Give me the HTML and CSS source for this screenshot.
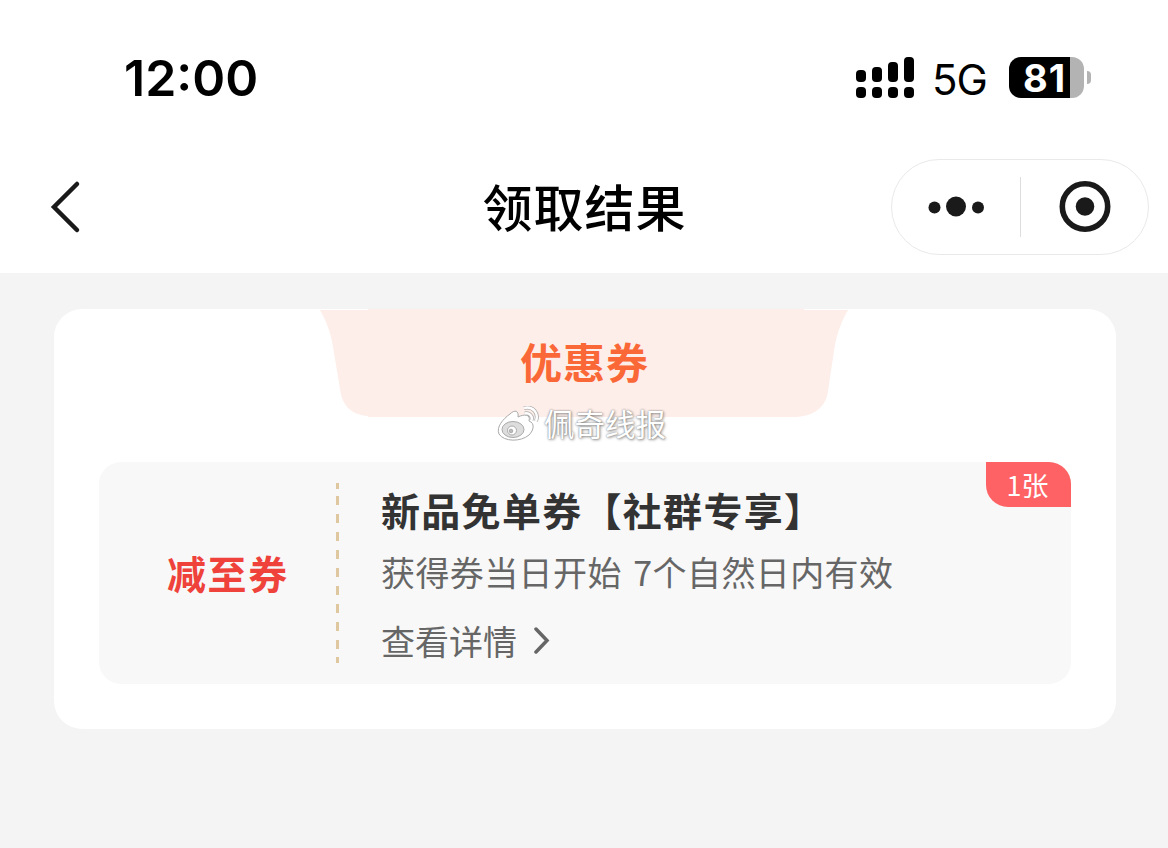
FILE: index.html
```
<!DOCTYPE html>
<html lang="zh-CN">
<head>
  <meta charset="UTF-8">
  <title>领取结果</title>
  <link rel="stylesheet" href="styles.css">
</head>
<body>
  <header class="statusbar">
    <span class="time">12:00</span>
    <div class="status-right">
      <svg class="signal" width="58" height="42" viewBox="0 0 58 42">
        <rect x="0" y="13" width="10" height="12" rx="4"/>
        <rect x="16" y="10" width="10" height="15" rx="4"/>
        <rect x="32" y="5" width="10" height="20" rx="4"/>
        <rect x="48" y="0" width="10" height="25" rx="4"/>
        <rect x="0" y="30" width="10" height="11" rx="4"/>
        <rect x="16" y="30" width="10" height="11" rx="4"/>
        <rect x="32" y="30" width="10" height="11" rx="4"/>
        <rect x="48" y="30" width="10" height="11" rx="4"/>
      </svg>
      <span class="network">5G</span>
      <div class="battery">81</div>
      <i class="battery-tip"></i>
    </div>
  </header>

  <nav class="navbar">
    <svg class="back" width="32" height="54" viewBox="0 0 32 54">
      <path d="M28 4 L5 27 L28 50"/>
    </svg>
    <h1>领取结果</h1>
    <div class="capsule">
      <svg width="58" height="24" viewBox="0 0 58 24">
        <circle cx="7.500" cy="12.500" r="6"/>
        <circle cx="29" cy="11.500" r="10"/>
        <circle cx="51" cy="12.500" r="6"/>
      </svg>
      <span class="split"></span>
      <svg width="52" height="52" viewBox="0 0 52 52">
        <circle class="ring" cx="26" cy="25.500" r="22.7"/>
        <circle cx="26" cy="25.500" r="9.3"/>
      </svg>
    </div>
  </nav>

  <main class="content">
    <section class="card">
      <div class="card-head">
        <svg class="tab" width="530" height="108" viewBox="0 0 530 108">
          <path d="M0 1 H48 V0 H484 V1 H528 C520 15 516 28 514 42 L508 82 C506 99 493 107 476 108 H48 V107 C32 106 22 97 20 80 L13 38 C11 24 7 14 0 1 Z"/>
        </svg>
        <h2>优惠券</h2>
        <div class="watermark">
          <svg width="42" height="36" viewBox="0 0 42 36">
            <path d="M13 8 C18 3 22 5 21 11 C27 8 34 8 32 15 C38 17 37 24 32 29 C24 36 7 36 2 28 C-1 21 6 13 13 8 Z"/>
            <ellipse class="eye" cx="16" cy="23.5" rx="11" ry="8"/>
            <circle cx="15" cy="24.5" r="4.5"/>
            <circle class="pupil" cx="14" cy="25" r="1.8"/>
            <path class="outline" d="M27 2 C36 0 42 7 39 15 M28 7.5 C32 6.5 36 10 34.5 14"/>
            <path class="wave" d="M27 2 C36 0 42 7 39 15 M28 7.5 C32 6.5 36 10 34.5 14"/>
          </svg>
          <span>佩奇线报</span>
        </div>
      </div>

      <div class="coupon">
        <div class="coupon-type">减至券</div>
        <svg class="divider" width="3" height="180" viewBox="0 0 3 180">
          <path d="M1.5 0 V6 M1.5 13 V174" stroke-dasharray="9 9"/>
          <path d="M1.5 174 V180"/>
        </svg>
        <div class="coupon-info">
          <h3>新品免单券【社群专享】</h3>
          <p>获得券当日开始 7个自然日内有效</p>
          <a class="detail">
            <span>查看详情</span>
            <svg width="18" height="28" viewBox="0 0 18 28">
              <path d="M3 2 L14 13.5 L3 25"/>
            </svg>
          </a>
        </div>
        <span class="badge">1张</span>
      </div>
    </section>
  </main>
</body>
</html>
```

FILE: styles.css
```
* {
  box-sizing: border-box;
}

body {
  margin: 0;
  width: 1168px;
  height: 848px;
  overflow: hidden;
  background: #f4f4f4;
  font-family: "Noto Sans CJK SC", sans-serif;
}

h1, h2, h3, p {
  margin: 0;
}

svg {
  display: block;
  flex: none;
}

/* status bar */
.statusbar {
  display: flex;
  justify-content: space-between;
  height: 141px;
  padding: 57px 77px 0 124px;
  background: #fff;
  color: #000;
  font-family: Inter, sans-serif;
}

.time {
  height: 42px;
  line-height: 42px;
  font-size: 50px;
  font-weight: 600;
}

.status-right {
  display: flex;
  height: 42px;
}

.network {
  width: 56px;
  margin: 2px 21px 0 18px;
  line-height: 42px;
  font-size: 42px;
  letter-spacing: -1px;
}

.battery {
  width: 75px;
  height: 41px;
  padding-left: 14px;
  border-radius: 12px;
  background: linear-gradient(to right, #000 61px, #b3b3b3 61px);
  color: #fff;
  font-size: 38px;
  font-weight: 700;
  line-height: 42px;
  letter-spacing: 1px;
}

.battery-tip {
  width: 4px;
  height: 13px;
  margin: 14px 0 0 3px;
  border-radius: 0 5px 5px 0;
  background: #b3b3b3;
}

/* navigation */
.navbar {
  display: grid;
  grid-template-columns: 1fr 220px 1fr;
  align-items: center;
  height: 132px;
  padding: 0 19px 0 49px;
  background: #fff;
}

.back path {
  fill: none;
  stroke: #1a1a1a;
  stroke-width: 4.5;
  stroke-linecap: round;
}

.navbar h1 {
  margin: -4px 0 0 -29px;
  text-align: center;
  white-space: nowrap;
  font-size: 50px;
  font-weight: 500;
  line-height: 60px;
  letter-spacing: 1px;
  color: #000;
}

.capsule {
  display: flex;
  align-items: center;
  justify-self: end;
  width: 258px;
  height: 96px;
  padding-left: 35px;
  border: 1px solid #e9e9e9;
  border-radius: 48px;
  fill: #1a1a1a;
}

.split {
  width: 1px;
  height: 60px;
  margin: 0 38px 0 35px;
  background: #dedede;
}

.ring {
  fill: none;
  stroke: #1a1a1a;
  stroke-width: 5.6;
}

/* card */
.content {
  padding: 36px 52px 0 54px;
}

.card {
  height: 420px;
  padding: 0 45px;
  border-radius: 28px;
  background: #fff;
}

.card-head {
  position: relative;
  height: 153px;
  padding-top: 27px;
}

.tab {
  position: absolute;
  top: 0;
  left: 221px;
  fill: #feeeea;
}

.card-head h2 {
  position: relative;
  margin-left: -1px;
  text-align: center;
  font-size: 42px;
  font-weight: 700;
  line-height: 50px;
  letter-spacing: 1px;
  color: #fa6838;
}

.watermark {
  position: absolute;
  top: 97px;
  left: 398px;
  display: flex;
  gap: 5px;
  color: #fff;
  font-size: 30.5px;
  line-height: 34px;
  text-shadow: 0 0 2px #777, 1px 1px 3px #999;
}

.watermark path,
.watermark circle {
  fill: #fff;
  stroke: #aaa;
  stroke-width: 1;
}

.watermark .eye {
  fill: #ddd;
  stroke: #aaa;
}

.watermark .pupil {
  fill: #bbb;
}

.watermark .outline {
  fill: none;
  stroke: #aaa;
  stroke-width: 4;
}

.watermark .wave {
  fill: none;
  stroke: #fff;
  stroke-width: 2.5;
}

.coupon {
  position: relative;
  display: flex;
  height: 222px;
  border-radius: 22px;
  background: #f8f8f8;
}

.coupon-type {
  width: 237px;
  padding-left: 68px;
  font-size: 39px;
  font-weight: 700;
  line-height: 220px;
  letter-spacing: 1.6px;
  color: #ee423b;
}

.divider {
  margin-top: 21px;
}

.divider path {
  stroke: #dfc8a0;
  stroke-width: 3;
}

.coupon-info {
  padding: 22px 0 0 42px;
  color: #666;
  font-size: 34px;
}

.coupon-info h3 {
  font-size: 39px;
  font-weight: 700;
  line-height: 50px;
  letter-spacing: 1.3px;
  color: #333;
}

.coupon-info p {
  margin-top: 15px;
  line-height: 46px;
  letter-spacing: 0.4px;
  word-spacing: 3.5px;
}

.detail {
  display: flex;
  align-items: center;
  gap: 16px;
  margin-top: 23px;
  line-height: 46px;
}

.detail path {
  fill: none;
  stroke: #666;
  stroke-width: 3.5;
  stroke-linecap: round;
}

.badge {
  position: absolute;
  top: 0;
  right: 0;
  width: 85px;
  height: 45px;
  padding-right: 2px;
  border-radius: 0 22px 0 22px;
  background: #fe6264;
  color: #fff;
  font-size: 27px;
  line-height: 45px;
  text-align: center;
}
```
